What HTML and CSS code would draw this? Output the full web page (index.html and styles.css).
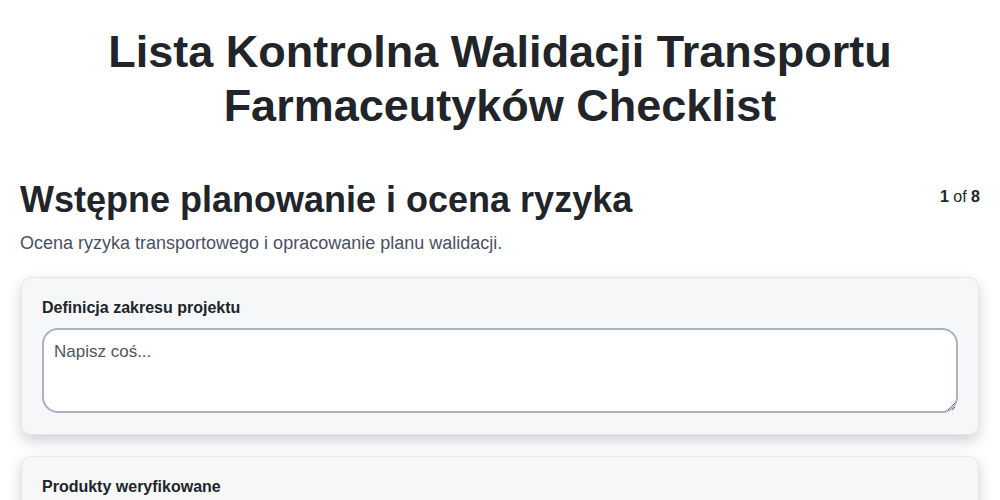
FILE: index.html
```html
<!DOCTYPE html>
<html lang="pl">

<head>
    <meta charset="UTF-8">
    <meta name="viewport" content="width=device-width, initial-scale=1.0">
    <title>Lista Kontrolna Walidacji Transportu Farmaceutyków Checklist</title>
    <link rel="stylesheet" href="styles.css">
</head>

<body>
    <h1 class="title">Lista Kontrolna Walidacji Transportu Farmaceutyków Checklist</h1>

    <div class="step">
        <div class="step-header">
            <h2 class="step-title">Wstępne planowanie i ocena ryzyka</h2>
            <div class="step-count"><b>1</b> of <b>8</b></div>
        </div>
        <p class="step-desc">Ocena ryzyka transportowego i opracowanie planu walidacji.</p>

        <div class="card">
            <label class="card-label" for="q1">Definicja zakresu projektu</label>
            <textarea id="q1" class="answer" placeholder="Napisz coś..."></textarea>
        </div>

        <div class="card">
            <label class="card-label" for="q2">Produkty weryfikowane</label>
            <textarea id="q2" class="answer" placeholder="Napisz coś..."></textarea>
        </div>
    </div>
</body>

</html>
```

FILE: styles.css
```css
body {
    margin: 0;
    padding: 0 20px;
    font-family: 'Liberation Sans', Arial, sans-serif;
    color: #212529;
    background: #fff;
}

.title {
    margin: 25px auto 0;
    max-width: 860px;
    text-align: center;
    font-size: 45px;
    line-height: 54px;
    font-weight: bold;
}

.step-header {
    display: flex;
    justify-content: space-between;
    align-items: flex-start;
    margin-top: 45px;
}

.step-title {
    margin: 0;
    font-size: 36px;
    line-height: 44px;
    font-weight: bold;
}

.step-count {
    font-size: 16px;
    padding-top: 10px;
}

.step-desc {
    margin: 11px 0 23px;
    font-size: 18px;
    color: #4a5061;
}

.card {
    display: flex;
    flex-direction: column;
    margin: 0 1px 21px;
    padding: 21px 20px 21px;
    background: #f6f7f9;
    border: 1px solid #e4e6ea;
    border-radius: 10px;
    box-shadow: 0 6px 14px rgba(40, 44, 60, 0.22);
}

.card-label {
    font-size: 16px;
    font-weight: bold;
    margin-bottom: 11px;
}

.answer {
    height: 85px;
    box-sizing: border-box;
    padding: 12px 10px;
    border: 2px solid #aab2bb;
    border-radius: 16px;
    font-family: 'Liberation Sans', Arial, sans-serif;
    font-size: 17px;
    color: #212529;
    background: #fff;
    resize: vertical;
}

.answer::placeholder {
    color: #4f5561;
}
```
